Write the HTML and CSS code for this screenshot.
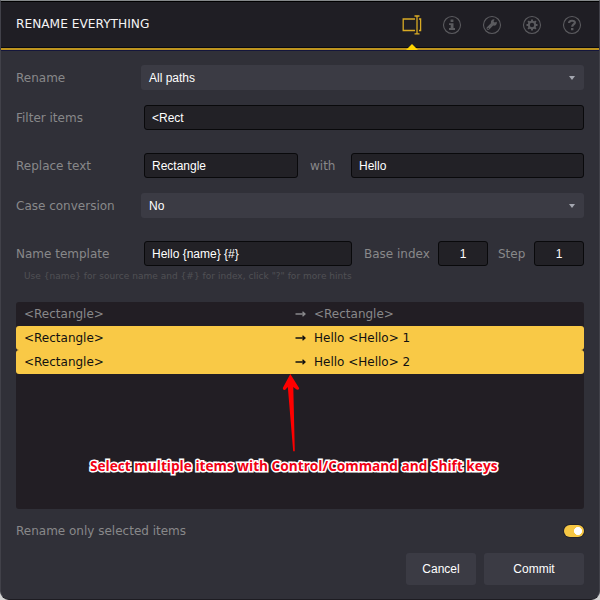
FILE: index.html
```
<!DOCTYPE html>
<html lang="en">
<head>
<meta charset="utf-8">
<title>Rename Everything</title>
<link rel="stylesheet" href="styles.css">
</head>
<body>
<div class="dialog">
  <header class="header">
    <h1 class="title">RENAME EVERYTHING</h1>
    <nav class="tabs">
      <span class="tab active">
        <svg width="20" height="20" viewBox="0 0 20 20" fill="none" stroke="#d9ab24" stroke-width="1.3"><path d="M13 4H1.200v11.500H13M17 4h1.600v11.500H17M12.500 1h5M12.500 18.800h5M15 1v17.800"/></svg>
      </span>
      <span class="tab">
        <svg width="20" height="20" viewBox="0 0 20 20"><circle cx="10" cy="10" r="8.500" fill="none" stroke="#5b5b5f" stroke-width="1.100"/><path fill="#5b5b5f" d="M8.600 4.400h2.800v2.500H8.600zM7 8.200h4.500v4.900H13V15H7v-1.900h1.700V10H7z"/></svg>
      </span>
      <span class="tab">
        <svg width="20" height="20" viewBox="0 0 20 20"><circle cx="10" cy="10" r="8.500" fill="none" stroke="#5b5b5f" stroke-width="1.100"/><path fill="#5b5b5f" d="M14.700 6.700l-2 .9-1.200-1.200 1-2C10.500 4 8.500 5.600 8.900 8.200L4.900 12.300c-1.300 1.400.8 3.600 2.300 2.200l4-3.900c2.600.5 4.200-1.600 3.500-3.900zM6.200 14.200a.7.7 0 1 1 0-1.400.7.7 0 0 1 0 1.400z"/></svg>
      </span>
      <span class="tab">
        <svg width="20" height="20" viewBox="0 0 20 20"><circle cx="10" cy="10" r="8.500" fill="none" stroke="#5b5b5f" stroke-width="1.100"/><circle cx="10" cy="10" r="3.200" fill="none" stroke="#5b5b5f" stroke-width="2"/><path stroke="#5b5b5f" stroke-width="2" d="M10 4.500V7M10 13v2.500M4.500 10H7M13 10h2.500M6.100 6.100l1.700 1.700M12.200 12.200l1.700 1.700M13.900 6.100l-1.700 1.700M7.800 12.200l-1.700 1.700"/></svg>
      </span>
      <span class="tab">
        <svg width="20" height="20" viewBox="0 0 20 20"><circle cx="10" cy="10" r="8.500" fill="none" stroke="#5b5b5f" stroke-width="1.100"/><path fill="none" stroke="#5b5b5f" stroke-width="2.200" d="M7.100 8C7 5.200 12.900 4.900 12.900 7.600c0 2-2.700 1.800-2.700 4.200"/><path fill="#5b5b5f" d="M9 13h2.400v2.300H9z"/></svg>
      </span>
    </nav>
  </header>

  <main class="form">
    <div class="row">
      <span class="label">Rename</span>
      <div class="select"><span>All paths</span><i class="caret"></i></div>
    </div>
    <div class="row filter">
      <span class="label">Filter items</span>
      <div class="input">&lt;Rect</div>
    </div>
    <div class="row replace">
      <span class="label">Replace text</span>
      <div class="input find">Rectangle</div>
      <span class="with">with</span>
      <div class="input">Hello</div>
    </div>
    <div class="row case">
      <span class="label">Case conversion</span>
      <div class="select"><span>No</span><i class="caret"></i></div>
    </div>
    <div class="row template">
      <span class="label">Name template</span>
      <div class="input pattern">Hello {name} {#}</div>
      <span class="base">Base index</span>
      <div class="input number">1</div>
      <span class="step">Step</span>
      <div class="input number">1</div>
    </div>
    <p class="hint">Use {name} for source name and {#} for index, click "?" for more hints</p>

    <div class="list">
      <div class="item"><span class="from">&lt;Rectangle&gt;</span><svg class="arrow" viewBox="0 0 12 8"><path d="M.5 4H10M7.500 1.700L10 4L7.500 6.300"/></svg><span>&lt;Rectangle&gt;</span></div>
      <div class="item selected"><span class="from">&lt;Rectangle&gt;</span><svg class="arrow" viewBox="0 0 12 8"><path d="M.5 4H10M7.500 1.700L10 4L7.500 6.300"/></svg><span>Hello &lt;Hello&gt; 1</span></div>
      <div class="item selected"><span class="from">&lt;Rectangle&gt;</span><svg class="arrow" viewBox="0 0 12 8"><path d="M.5 4H10M7.500 1.700L10 4L7.500 6.300"/></svg><span>Hello &lt;Hello&gt; 2</span></div>
      <div class="note">
        <svg class="pointer" width="18" height="79" viewBox="0 0 18 79"><path fill="#fe0000" d="M8.300 0L17.200 14.200Q16.500 16.500 14.200 15.300L11.300 13L12.800 77.200H11.200L5.800 13L3 16Q.500 16.200.800 14Z"/></svg>
        <span class="note-text">Select multiple items with Control/Command and Shift keys</span>
      </div>
    </div>

    <div class="option">
      <span>Rename only selected items</span>
      <i class="switch"></i>
    </div>
    <div class="actions">
      <div class="button cancel">Cancel</div>
      <div class="button commit">Commit</div>
    </div>
  </main>
</div>
</body>
</html>
```
FILE: styles.css
```
* { box-sizing: border-box; }
body {
  margin: 0;
  background: #d4d4d4;
  font: 12px/24px "DejaVu Sans", sans-serif;
  color: #88888a;
}
.dialog {
  width: 600px;
  height: 600px;
  overflow: hidden;
  border: 1px solid #414149;
  border-top-color: #84888a;
  border-bottom-color: #1d1c22;
  border-radius: 0 0 9px 9px;
  background: #303038;
}
.header {
  display: flex;
  justify-content: space-between;
  height: 49px;
  padding: 0 17px 0 15px;
  border-top: 1px solid #000;
  border-bottom: 2px solid #bd941f;
  background: #1f1e24;
  box-shadow: 0 1px #14163c, inset 0 -1px #090a10;
}
.title {
  margin: 0;
  font-size: 12.2px;
  font-weight: 400;
  line-height: 45px;
  color: #f4f4f4;
}
.tabs { display: flex; gap: 20px; }
.tab {
  position: relative;
  width: 20px;
  height: 47px;
  padding-top: 13px;
}
.tab svg { display: block; }
.tab.active::after {
  content: "";
  position: absolute;
  left: 4px;
  bottom: -1px;
  border: 6px solid transparent;
  border-top: 0;
  border-bottom-color: #ffd500;
}
.form { padding: 15px 15px 0; }
.row {
  display: flex;
  align-items: center;
  height: 25px;
  white-space: nowrap;
}
.filter { margin-top: 15px; }
.replace { margin-top: 23px; }
.case { margin-top: 15px; }
.template { margin-top: 23px; }
.label { flex: 0 0 128px; }
.input, .select, .button {
  font-family: "Liberation Sans", sans-serif;
  font-size: 12px;
  color: #fff;
}
.input {
  flex: 1;
  height: 25px;
  padding: 0 7px;
  border: 1px solid #09090b;
  border-radius: 3px;
  background: #222126;
  line-height: 24px;
}
.select {
  display: flex;
  flex: 1;
  align-items: center;
  justify-content: space-between;
  height: 25px;
  margin-left: -3px;
  padding: 0 9px 0 8px;
  border-radius: 3px;
  background: #3b3b44;
}
.caret {
  border: 3px solid transparent;
  border-top: 4px solid #a4a7b0;
  border-bottom: 0;
  margin-top: 1px;
}
.find { flex: 0 0 154px; }
.with { flex: 0 0 53px; padding-left: 12px; }
.pattern { flex: 0 0 208px; }
.base { flex: 0 0 86px; padding-left: 12px; }
.step { flex: 0 0 46px; padding-left: 10px; }
.number { flex: 0 0 50px; text-align: center; }
.hint {
  margin: 0 0 0 8px;
  height: 36px;
  font-size: 9px;
  letter-spacing: 0.03px;
  line-height: 20px;
  color: #505055;
}
.list {
  position: relative;
  height: 207px;
  border-radius: 3px;
  background: #221e24;
}
.item {
  display: flex;
  align-items: center;
  height: 24px;
  padding-left: 8px;
  border-radius: 3px;
}
.from { width: 271px; }
.arrow {
  width: 12px;
  height: 8px;
  margin-right: 7px;
  fill: none;
  stroke: #88888a;
  stroke-width: 1.3;
}
.selected { background: #f9c946; color: #111; }
.selected .arrow { stroke: #111; }
.note {
  position: absolute;
  top: 72px;
  left: 74px;
  font: 700 13.66px/20px "Open Sans", sans-serif;
  color: #f00014;
  white-space: nowrap;
}
.pointer { display: block; margin-left: 192px; }
.note-text {
  display: block;
  margin-top: 3px;
  -webkit-text-stroke: 3px #fff;
  paint-order: stroke fill;
}
.option {
  display: flex;
  align-items: center;
  justify-content: space-between;
  height: 24px;
  margin-top: 10px;
}
.switch {
  width: 20px;
  height: 12px;
  border-radius: 6px;
  background: radial-gradient(circle at 14px 6px, #fff 3.7px, #f6c744 4.3px);
  box-shadow: 0 0 0 1px #24232a;
}
.actions {
  display: flex;
  justify-content: flex-end;
  gap: 8px;
  margin-top: 10px;
}
.button {
  height: 32px;
  border-radius: 3px;
  background: #3b3b44;
  line-height: 32px;
  text-align: center;
}
.cancel { width: 70px; }
.commit { width: 100px; }
```
